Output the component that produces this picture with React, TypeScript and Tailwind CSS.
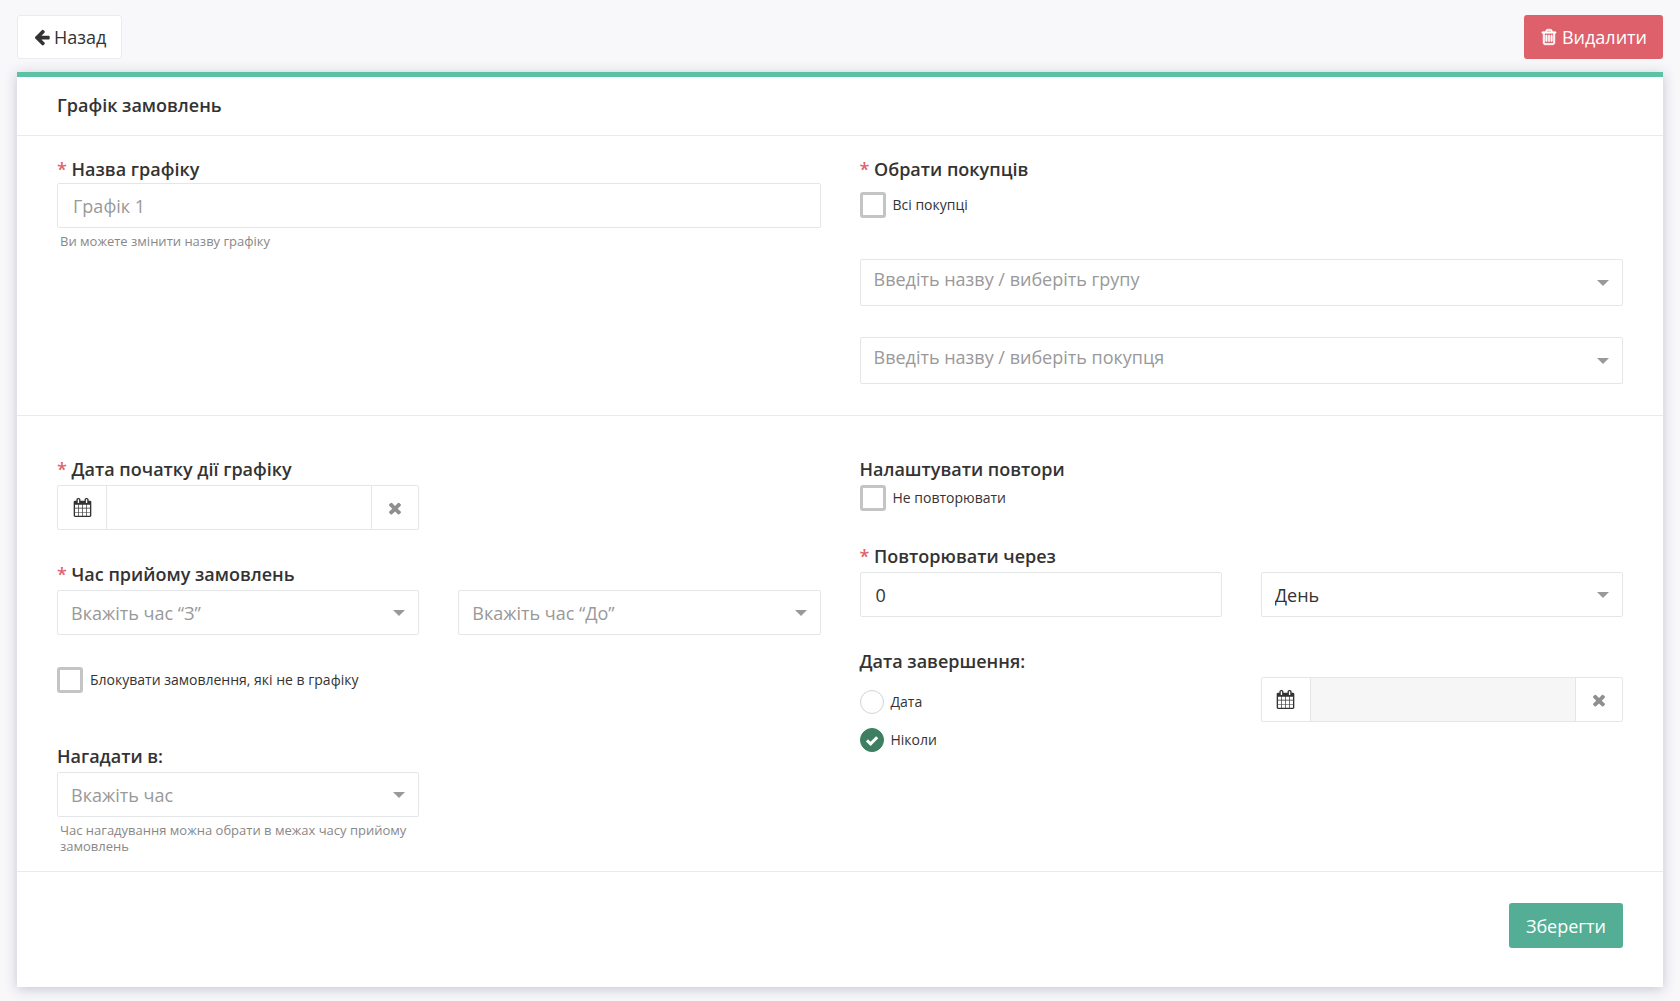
import type { ReactNode } from 'react'

const icons = {
  arrowLeft:
    'M1664 896v128q0 53-32.5 90.5t-84.5 37.5h-704l293 294q38 36 38 90t-38 90l-75 76q-37 37-90 37-52 0-91-37l-651-652q-37-37-37-90 0-52 37-91l651-650q38-38 91-38 52 0 90 38l75 74q38 38 38 91t-38 91l-293 293h704q52 0 84.5 37.5t32.5 90.5z',
  trash:
    'M704 736v576q0 14-9 23t-23 9h-64q-14 0-23-9t-9-23v-576q0-14 9-23t23-9h64q14 0 23 9t9 23zm256 0v576q0 14-9 23t-23 9h-64q-14 0-23-9t-9-23v-576q0-14 9-23t23-9h64q14 0 23 9t9 23zm256 0v576q0 14-9 23t-23 9h-64q-14 0-23-9t-9-23v-576q0-14 9-23t23-9h64q14 0 23 9t9 23zm128 724v-948h-896v948q0 22 7 40.5t14.5 27 10.5 8.5h832q3 0 10.5-8.5t14.5-27 7-40.5zm-672-1076h448l-48-117q-7-9-17-11h-317q-10 2-17 11zm928 32v64q0 14-9 23t-23 9h-96v948q0 83-47 143.5t-113 60.5h-832q-66 0-113-58.5t-47-141.5v-952h-96q-14 0-23-9t-9-23v-64q0-14 9-23t23-9h309l70-167q15-37 54-63t79-26h320q40 0 79 26t54 63l70 167h309q14 0 23 9t9 23z',
  calendar:
    'M192 1664h288v-288h-288v288zm352 0h320v-288h-320v288zm-352-352h288v-320h-288v320zm352 0h320v-320h-320v320zm-352-384h288v-288h-288v288zm736 736h320v-288h-320v288zm-384-736h320v-288h-320v288zm768 736h288v-288h-288v288zm-384-352h320v-320h-320v320zm-352-864v-288q0-13-9.5-22.5t-22.5-9.5h-64q-13 0-22.5 9.5t-9.5 22.5v288q0 13 9.5 22.5t22.5 9.5h64q13 0 22.5-9.5t9.5-22.5zm736 864h288v-320h-288v320zm-384-384h320v-288h-320v288zm384 0h288v-288h-288v288zm32-480v-288q0-13-9.5-22.5t-22.5-9.5h-64q-13 0-22.5 9.5t-9.5 22.5v288q0 13 9.5 22.5t22.5 9.5h64q13 0 22.5-9.5t9.5-22.5zm384-64v1280q0 52-38 90t-90 38h-1408q-52 0-90-38t-38-90v-1280q0-52 38-90t90-38h128v-96q0-66 47-113t113-47h64q66 0 113 47t47 113v96h384v-96q0-66 47-113t113-47h64q66 0 113 47t47 113v96h128q52 0 90 38t38 90z',
  times:
    'M1490 1322q0 40-28 68l-136 136q-28 28-68 28t-68-28l-294-294-294 294q-28 28-68 28t-68-28l-136-136q-28-28-28-68t28-68l294-294-294-294q-28-28-28-68t28-68l136-136q28-28 68-28t68 28l294 294 294-294q28-28 68-28t68 28l136 136q28 28 28 68t-28 68l-294 294 294 294q28 28 28 68z',
}

function Icon({ name, className }: { name: keyof typeof icons; className: string }) {
  return (
    <svg viewBox="0 0 1792 1792" fill="currentColor" aria-hidden="true" className={className}>
      <path d={icons[name]} />
    </svg>
  )
}

type LabelProps = { htmlFor?: string; required?: boolean; children: ReactNode }

function Label({ htmlFor, required, children }: LabelProps) {
  return (
    <label htmlFor={htmlFor} className="block text-lg leading-[26px] font-semibold">
      {required && <span className="text-[#e0626b]">* </span>}
      {children}
    </label>
  )
}

type SelectProps = {
  id: string
  label?: string
  text: string
  filled?: boolean
  tall?: boolean
}

function Select({ id, label, text, filled, tall }: SelectProps) {
  return (
    <div className="relative">
      <select
        id={id}
        aria-label={label}
        className={`block w-full appearance-none rounded-xs border border-[#e5e6e7] bg-white pr-9 pl-[13px] text-lg outline-none ${
          tall ? 'h-[47px] pb-2' : 'h-[45px]'
        } ${filled ? '' : 'text-[#999]'}`}
      >
        <option>{text}</option>
      </select>
      <svg
        viewBox="0 0 12 6"
        aria-hidden="true"
        className="pointer-events-none absolute top-1/2 right-[14px] h-[6px] w-3 -translate-y-1/2 fill-[#999]"
      >
        <path d="M0 0h12L6 6z" />
      </svg>
    </div>
  )
}

function Checkbox({ id, children }: { id: string; children: ReactNode }) {
  return (
    <div className="flex items-center gap-[7px]">
      <input
        id={id}
        type="checkbox"
        className="size-[26px] shrink-0 appearance-none rounded-[3px] border-3 border-[#c4c4c4] bg-white checked:bg-[#3d7f60]"
      />
      <label htmlFor={id} className="text-sm">
        {children}
      </label>
    </div>
  )
}

type RadioProps = { id: string; defaultChecked?: boolean; children: ReactNode }

function Radio({ id, defaultChecked, children }: RadioProps) {
  return (
    <div className="flex items-center gap-[7px]">
      <span className="relative flex">
        <input
          id={id}
          type="radio"
          name="end"
          defaultChecked={defaultChecked}
          className="peer size-6 appearance-none rounded-full border border-[#d3d3cf] bg-white checked:border-[#3d7f60] checked:bg-[#3d7f60]"
        />
        <svg
          viewBox="0 0 24 24"
          aria-hidden="true"
          className="pointer-events-none absolute inset-0 hidden size-6 fill-none stroke-white stroke-3 peer-checked:block"
        >
          <path d="M7 12.4l3.6 3.4 6.6-6.6" />
        </svg>
      </span>
      <label htmlFor={id} className="text-sm">
        {children}
      </label>
    </div>
  )
}

type DateFieldProps = { id: string; label?: string; disabled?: boolean }

function DateField({ id, label, disabled }: DateFieldProps) {
  return (
    <div className="flex h-[45px] rounded-xs border border-[#e5e6e7]">
      <span className="flex w-12 shrink-0 items-center justify-center">
        <Icon name="calendar" className="size-[19px]" />
      </span>
      <input
        id={id}
        type="text"
        aria-label={label}
        disabled={disabled}
        className="min-w-0 flex-1 border-x border-[#e5e6e7] px-4 text-lg outline-none disabled:bg-[#f6f6f6]"
      />
      <button
        type="button"
        aria-label="Очистити"
        className="flex w-[46px] shrink-0 items-center justify-center text-[#8f8f8f]"
      >
        <Icon name="times" className="size-[18px]" />
      </button>
    </div>
  )
}

const inputClass =
  'block h-[45px] w-full rounded-xs border border-[#e5e6e7] bg-white px-[15px] text-lg outline-none placeholder:text-[#999]'

export default function App() {
  return (
    <div className="min-h-screen bg-[#f8f8fb] px-[17px] pt-[15px] pb-[14px] font-['Open_Sans','Noto_Sans',sans-serif] text-[#333]">
      <div className="flex justify-between">
        <button
          type="button"
          className="flex h-11 items-center gap-[3px] rounded-[3px] border border-[#ebebee] bg-white px-[15px] text-lg"
        >
          <Icon name="arrowLeft" className="size-[18px]" />
          Назад
        </button>
        <button
          type="button"
          className="flex h-11 items-center gap-1 rounded-[3px] bg-[#dd606a] px-4 text-lg text-white"
        >
          <Icon name="trash" className="size-[18px] stroke-current stroke-[70]" />
          Видалити
        </button>
      </div>

      <form className="mt-[13px] border-t-5 border-[#5bc2a4] bg-white shadow-[0_2px_12px_rgba(60,60,100,0.28)]">
        <h1 className="border-b border-[#e9eaec] px-10 pt-[15px] pb-[17px] text-lg leading-[26px] font-semibold">
          Графік замовлень
        </h1>

        <div className="grid grid-cols-2 gap-x-[39px] border-b border-[#e9eaec] px-10 pt-5 pb-[31px]">
          <div>
            <div className="flex flex-col gap-px">
              <Label htmlFor="name" required>
                Назва графіку
              </Label>
              <input id="name" type="text" placeholder="Графік 1" className={inputClass} />
            </div>
            <p className="mt-[5px] ml-[3px] text-[13px] leading-4 text-[#888]">
              Ви можете змінити назву графіку
            </p>
          </div>
          <div>
            <Label required>Обрати покупців</Label>
            <div className="mt-[10px] mb-[41px]">
              <Checkbox id="all">Всі покупці</Checkbox>
            </div>
            <div className="flex flex-col gap-[31px]">
              <Select id="group" label="Група" text="Введіть назву / виберіть групу" tall />
              <Select id="buyer" label="Покупець" text="Введіть назву / виберіть покупця" tall />
            </div>
          </div>
        </div>

        <div className="grid grid-cols-2 gap-x-[39px] border-b border-[#e9eaec] px-10 pt-10 pb-[17px]">
          <div>
            <div className="grid grid-cols-2 gap-x-[39px]">
              <div className="flex flex-col gap-[3px]">
                <Label htmlFor="start" required>
                  Дата початку дії графіку
                </Label>
                <DateField id="start" />
              </div>
            </div>
            <div className="mt-[31px] grid grid-cols-2 items-end gap-x-[39px]">
              <div className="flex flex-col gap-[3px]">
                <Label htmlFor="from" required>
                  Час прийому замовлень
                </Label>
                <Select id="from" text="Вкажіть час “З”" />
              </div>
              <Select id="to" label="Час до" text="Вкажіть час “До”" />
            </div>
            <div className="mt-8 mb-[50px]">
              <Checkbox id="block">Блокувати замовлення, які не в графіку</Checkbox>
            </div>
            <div className="grid grid-cols-2 gap-x-[39px]">
              <div className="flex flex-col gap-[3px]">
                <Label htmlFor="remind">Нагадати в:</Label>
                <Select id="remind" text="Вкажіть час" />
                <p className="mt-[2px] ml-[3px] text-[13px] leading-4 text-[#888]">
                  Час нагадування можна обрати в межах часу прийому замовлень
                </p>
              </div>
            </div>
          </div>

          <div>
            <div className="flex flex-col gap-[3px]">
              <Label>Налаштувати повтори</Label>
              <Checkbox id="once">Не повторювати</Checkbox>
            </div>
            <div className="mt-8 grid grid-cols-2 items-end gap-x-[39px]">
              <div className="flex flex-col gap-[3px]">
                <Label htmlFor="every" required>
                  Повторювати через
                </Label>
                <input id="every" type="text" defaultValue="0" className={inputClass} />
              </div>
              <Select id="unit" label="Період" text="День" filled />
            </div>
            <div className="mt-[31px] grid grid-cols-2 gap-x-[39px]">
              <div>
                <Label>Дата завершення:</Label>
                <div className="mt-4 flex flex-col gap-[14px]">
                  <Radio id="end-date">Дата</Radio>
                  <Radio id="end-never" defaultChecked>
                    Ніколи
                  </Radio>
                </div>
              </div>
              <div className="pt-[29px]">
                <DateField id="end" label="Дата завершення" disabled />
              </div>
            </div>
          </div>
        </div>

        <div className="flex justify-end px-10 pt-[31px] pb-[39px]">
          <button
            type="submit"
            className="h-[45px] rounded-[3px] bg-[#54ae95] px-[17px] text-lg text-white"
          >
            Зберегти
          </button>
        </div>
      </form>
    </div>
  )
}
